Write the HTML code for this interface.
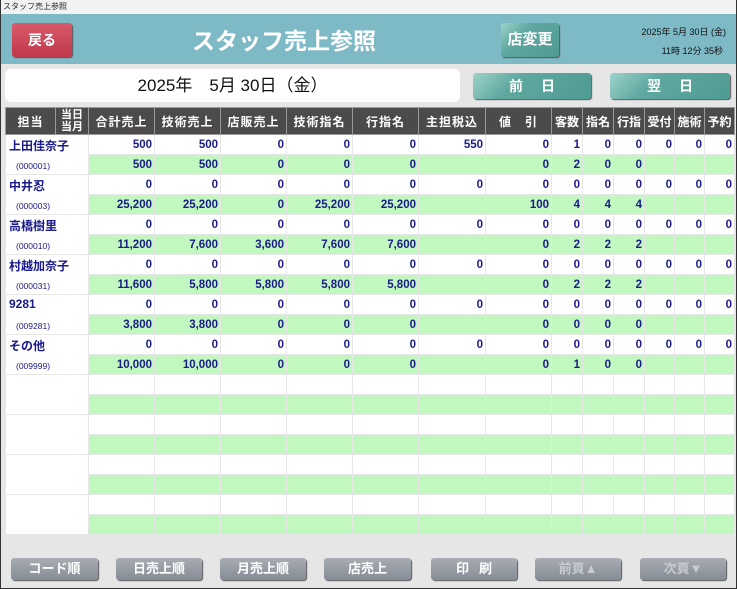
<!DOCTYPE html>
<html><head><meta charset="utf-8"><style>
*{margin:0;padding:0;box-sizing:border-box}
body{width:737px;height:589px;overflow:hidden;background:#e6e6e6;font-family:"Liberation Sans","Noto Sans CJK JP",sans-serif;position:relative}
.frame{position:absolute;inset:0;border:1px solid #333;border-top:none}
.titlebar{position:absolute;left:0;top:0;width:737px;height:14px;background:#f2f2f2;font-size:8px;line-height:14px;padding-left:3px;color:#222}
.top{position:absolute;left:1px;top:14px;width:735px;height:50px;background:#7eb9c6}
.btn{position:absolute;color:#fff;font-weight:bold;text-align:center;border-radius:3px}
.teal{background:linear-gradient(135deg,#9fd3ca 0%,#5fa8a0 35%,#4e9b93 100%);box-shadow:1px 1px 1px #555}
.gray{background:linear-gradient(180deg,#a8adb4,#868c95);box-shadow:1px 1px 1px #555;font-size:13px;line-height:22px}
.abs{position:absolute}
table{position:absolute;left:5px;top:107px;border-collapse:collapse;table-layout:fixed}
td{border:1px solid #e6e6e6;height:20px;font-size:11.5px;color:#1a1a8a;text-align:right;padding-right:2px;font-weight:bold;white-space:nowrap;overflow:hidden}
th{background:#4d4a4a;color:#fff;font-weight:bold;font-size:12px;border:1px solid #9a9a9a;height:27px;letter-spacing:1px}
.g td{background:#c0f8c0}
.w td{background:#fff}
td.nm{background:#fff!important;text-align:left;vertical-align:top;padding:2px 0 0 3px;position:relative;font-size:12px}
td.nm span{position:absolute;left:10px;top:26px;font-size:8.5px;font-weight:normal}
</style></head><body>
<div class="titlebar">スタッフ売上参照</div>
<div class="top"></div>
<div class="btn" style="left:12px;top:23px;width:60px;height:34px;background:linear-gradient(180deg,#d85a6a,#c0384c);box-shadow:1px 1px 1px #555;font-size:14px;line-height:34px">戻る</div>
<div class="abs" style="left:192px;top:22px;color:#fff;font-weight:bold;font-size:23px">スタッフ売上参照</div>
<div class="btn teal" style="left:501px;top:23px;width:58px;height:34px;font-size:15px;line-height:34px">店変更</div>
<div class="abs" style="left:620px;top:25px;width:106px;text-align:right;font-size:9px;color:#111">2025年 5月 30日 (金)</div>
<div class="abs" style="left:620px;top:44px;width:103px;text-align:right;font-size:9px;color:#111">11時 12分 35秒</div>
<div class="abs" style="left:5px;top:69px;width:455px;height:33px;background:#fff;border-radius:6px;text-align:center;font-size:17px;line-height:33px;color:#111">2025年　5月 30日（金）</div>
<div class="btn teal" style="left:473px;top:73px;width:118px;height:26px;font-size:14px;line-height:26px;letter-spacing:18px;text-indent:18px">前日</div>
<div class="btn teal" style="left:610px;top:73px;width:120px;height:26px;font-size:14px;line-height:26px;letter-spacing:18px;text-indent:18px">翌日</div>
<table id="t"></table>
<div class="btn gray" style="left:11px;top:558px;width:87px;height:22px">コード順</div>
<div class="btn gray" style="left:116px;top:558px;width:86px;height:22px">日売上順</div>
<div class="btn gray" style="left:220px;top:558px;width:86px;height:22px">月売上順</div>
<div class="btn gray" style="left:324px;top:558px;width:87px;height:22px">店売上</div>
<div class="btn gray" style="left:431px;top:558px;width:86px;height:22px;letter-spacing:10px;text-indent:10px">印刷</div>
<div class="btn gray" style="left:535px;top:558px;width:86px;height:22px;color:#c8ccd2">前頁▲</div>
<div class="btn gray" style="left:640px;top:558px;width:86px;height:22px;color:#c8ccd2">次頁▼</div>
<div class="frame"></div>
<script>
var W=[50,33,66,66,66,66,66,67,66,31,31,31,30,30,30];
var h='<colgroup>'+W.map(w=>'<col style="width:'+w+'px">').join('')+'</colgroup>';
h+='<tr><th>担当</th><th style="font-size:11px;line-height:12px;padding:0;letter-spacing:0">当日<br>当月</th>';
['合計売上','技術売上','店販売上','技術指名','行指名','主担税込','値　引','客数','指名','行指','受付','施術','予約'].forEach(x=>h+='<th style="'+(x.length<3?'letter-spacing:0':'')+'">'+x+'</th>');
h+='</tr>';
var z=['0','0','0','0','0','0','0','0','0','0','0','0','0'];
var D=[
['上田佳奈子','000001',['500','500','0','0','0','550','0','1','0','0','0','0','0'],['500','500','0','0','0','','0','2','0','0','','','']],
['中井忍','000003',z,['25,200','25,200','0','25,200','25,200','','100','4','4','4','','','']],
['高橋樹里','000010',z,['11,200','7,600','3,600','7,600','7,600','','0','2','2','2','','','']],
['村越加奈子','000031',z,['11,600','5,800','5,800','5,800','5,800','','0','2','2','2','','','']],
['9281','009281',z,['3,800','3,800','0','0','0','','0','0','0','0','','','']],
['その他','009999',z,['10,000','10,000','0','0','0','','0','1','0','0','','','']]];
var e=['','','','','','','','','','','','',''];
for(var i=0;i<4;i++)D.push(['','',e,e]);
D.forEach(r=>{
h+='<tr class="w"><td class="nm" colspan="2" rowspan="2">'+r[0]+(r[1]?'<span>('+r[1]+')</span>':'')+'</td>'+r[2].map(v=>'<td>'+v+'</td>').join('')+'</tr>';
h+='<tr class="g">'+r[3].map(v=>'<td>'+v+'</td>').join('')+'</tr>';
});
document.getElementById('t').innerHTML=h;
</script>
</body></html>
